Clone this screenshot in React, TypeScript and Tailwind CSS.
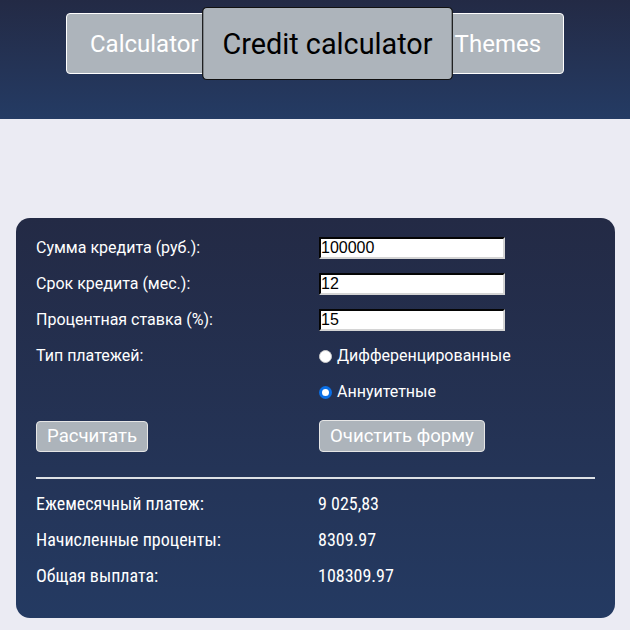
import React from "react";

const inputCls =
  "w-[186px] h-[22px] bg-white text-black border-2 border-t-[#5a5a5a] border-l-[#5a5a5a] border-b-[#d4d4d4] border-r-[#d4d4d4] px-0 text-[16px] leading-none outline-none";

const inputStyle: React.CSSProperties = {
  fontFamily: "'Liberation Sans', Arial, sans-serif",
  borderStyle: "inset",
};

export default function App() {
  const font = { fontFamily: "Roboto, 'Noto Sans', sans-serif" } as React.CSSProperties;
  return (
    <div className="min-h-[630px] bg-[#ebebf3]" style={font}>
      <header className="h-[119px] bg-gradient-to-b from-[#232a45] to-[#243b64] flex justify-center items-start pt-[13px]">
        <div className="flex">
          <button className="h-[61px] px-[23px] border border-white rounded-[4px] bg-[#adb4bb] text-white text-[24px] leading-none">
            Calculator
          </button>
          <button className="relative z-10 h-[61px] px-[16px] border border-[#111] rounded-[4px] bg-[#adb4bb] text-black text-[24px] leading-none scale-[1.2]">
            Credit calculator
          </button>
          <button className="h-[61px] px-[22px] border border-white rounded-[4px] bg-[#adb4bb] text-white text-[24px] leading-none">
            Themes
          </button>
        </div>
      </header>

      <main className="mt-[99px] ml-4 w-[599px] rounded-[14px] bg-gradient-to-b from-[#232a45] to-[#243a62] px-5 pt-3 pb-[25px] text-white">
        <div className="grid grid-cols-[283px_1fr]">
          <div className="h-9 flex items-center text-[16px]">Сумма кредита (руб.):</div>
          <div className="h-9 flex items-center">
            <input defaultValue="100000" className={inputCls} style={inputStyle} />
          </div>
          <div className="h-9 flex items-center text-[16px]">Срок кредита (мес.):</div>
          <div className="h-9 flex items-center">
            <input defaultValue="12" className={inputCls} style={inputStyle} />
          </div>
          <div className="h-9 flex items-center text-[16px]">Процентная ставка (%):</div>
          <div className="h-9 flex items-center">
            <input defaultValue="15" className={inputCls} style={inputStyle} />
          </div>
          <div className="h-9 flex items-center text-[16px]">Тип платежей:</div>
          <label className="h-9 flex items-center gap-[5px] text-[16px]">
            <span className="w-[13px] h-[13px] rounded-full bg-white border border-[#ccc] inline-block" />
            Дифференцированные
          </label>
          <div className="h-9" />
          <label className="h-9 flex items-center gap-[5px] text-[16px]">
            <span className="w-[13px] h-[13px] rounded-full bg-white border-[3px] border-[#0b6fe6] inline-block" />
            Аннуитетные
          </label>
          <div className="pt-[11px]">
            <button className="h-[31px] px-[10px] border border-[#e6e6e6] rounded-[4px] bg-[#adb4bb] text-white text-[18.6px] leading-none">
              Расчитать
            </button>
          </div>
          <div className="pt-[10px]">
            <button className="h-[32px] px-[10px] border border-[#e6e6e6] rounded-[4px] bg-[#adb4bb] text-white text-[18.6px] leading-none">
              Очистить форму
            </button>
          </div>
        </div>
        <div className="mt-[25px] h-[2px] bg-[#dde1e6]" />
        <div className="mt-[6px] grid grid-cols-[282px_1fr] text-[18px]" style={{ fontStretch: "condensed" }}>
          <div className="h-9 flex items-center">Ежемесячный платеж:</div>
          <div className="h-9 flex items-center">9 025,83</div>
          <div className="h-9 flex items-center">Начисленные проценты:</div>
          <div className="h-9 flex items-center">8309.97</div>
          <div className="h-9 flex items-center">Общая выплата:</div>
          <div className="h-9 flex items-center">108309.97</div>
        </div>
      </main>
    </div>
  );
}
